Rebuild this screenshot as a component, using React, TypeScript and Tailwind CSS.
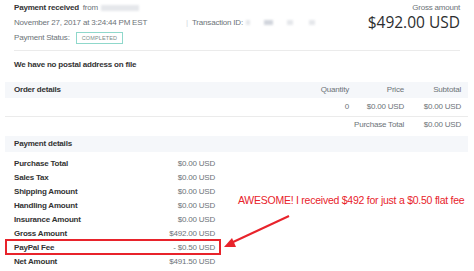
const paymentRows = [
  { label: "Purchase Total", value: "$0.00 USD" },
  { label: "Sales Tax", value: "$0.00 USD" },
  { label: "Shipping Amount", value: "$0.00 USD" },
  { label: "Handling Amount", value: "$0.00 USD" },
  { label: "Insurance Amount", value: "$0.00 USD" },
  { label: "Gross Amount", value: "$492.00 USD" },
  { label: "PayPal Fee", value: "- $0.50 USD", highlight: true },
  { label: "Net Amount", value: "$491.50 USD" },
];

const Blur = ({ className }: { className: string }) => (
  <span className={`inline-block blur-[1px] ${className}`} />
);

export default function App() {
  return (
    <div
      className="relative w-[474px] h-[271px] overflow-hidden bg-white text-[8px] tracking-[-0.2px] text-[#6c7378]"
      style={{ fontFamily: '"Liberation Sans", Arial, sans-serif' }}
    >
      <header className="px-[14px]">
        <div className="flex justify-between">
          <div className="leading-[15px]">
            <div className="flex items-center">
              <span className="font-bold text-[#333]">Payment received</span>
              <span className="ml-[4px]">from</span>
              <Blur className="ml-[3px] w-[38px] h-[6px] bg-gray-200" />
            </div>
            <div className="flex items-center">
              <span>November 27, 2017 at 3:24:44 PM EST</span>
              <span className="ml-[39px] text-gray-300">|</span>
              <span className="ml-[4px]">Transaction ID:</span>
              <Blur className="ml-[3px] w-[4px] h-[5px] bg-gray-200" />
              <Blur className="ml-[14px] w-[9px] h-[5px] bg-gray-300" />
              <Blur className="ml-[14px] w-[6px] h-[5px] bg-gray-200" />
              <Blur className="ml-[16px] w-[6px] h-[5px] bg-gray-200" />
            </div>
            <div className="flex items-center">
              <span>Payment Status:</span>
              <span className="ml-[6px] border border-[#8fd8cb] px-[5px] text-[5.5px] leading-[10px] tracking-wide text-[#7a8c88]">
                COMPLETED
              </span>
            </div>
          </div>
          <div className="flex flex-col items-end">
            <div className="leading-[15px]">Gross amount</div>
            <div
              className="text-[15.5px] leading-[15px] tracking-normal text-[#2c2e2f]"
              style={{ fontFamily: '"Open Sans", sans-serif' }}
            >
              $492.00 USD
            </div>
          </div>
        </div>
        <div className="mt-[5px] border-t border-[#ebebeb]" />
        <div className="mt-[6px] leading-[15px] font-bold text-[#333]">
          We have no postal address on file
        </div>
      </header>

      <section className="mt-[10px] ml-[5px] mr-[6px]">
        <div className="flex h-[16px] items-center bg-[#f5f7fa] pl-[9px] pr-[7px]">
          <span className="flex-1 font-bold text-[#333]">Order details</span>
          <span className="w-[60px] text-right">Quantity</span>
          <span className="w-[55px] text-right">Price</span>
          <span className="w-[57px] text-right">Subtotal</span>
        </div>
        <div className="flex h-[18px] items-center pr-[7px]">
          <span className="flex-1" />
          <span className="w-[60px] text-right">0</span>
          <span className="w-[55px] text-right">$0.00 USD</span>
          <span className="w-[57px] text-right">$0.00 USD</span>
        </div>
        <div className="flex h-[16px] items-center border-t border-[#ebebeb] pr-[7px]">
          <span className="flex-1" />
          <span className="w-[70px] text-right">Purchase Total</span>
          <span className="w-[57px] text-right">$0.00 USD</span>
        </div>

        <div className="mt-[4px] flex h-[16px] items-center bg-[#f5f7fa] pl-[9px]">
          <span className="font-bold text-[#333]">Payment details</span>
        </div>
        <div className="w-[216px] pt-[5px]">
          {paymentRows.map((row) => (
            <div key={row.label} className="relative flex h-[14px] items-center justify-between pl-[9px] pr-[6px]">
              <span className="font-bold text-[#333]">{row.label}</span>
              <span>{row.value}</span>
              {row.highlight && (
                <span className="absolute -top-[2px] bottom-0 left-0 right-0 border-2 border-[#e8232b]" />
              )}
            </div>
          ))}
        </div>
      </section>

      <div className="absolute left-[238px] top-[192px] whitespace-nowrap text-[10.5px] leading-[16px] tracking-[-0.25px] text-[#e8232b]">
        AWESOME! I received $492 for just a $0.50 flat fee
      </div>
      <svg className="absolute left-0 top-0" width="474" height="271">
        <line x1="289" y1="216" x2="231" y2="243" stroke="#e8232b" strokeWidth="2" />
        <path d="M224 247 L232 238 L236 247 Z" fill="#e8232b" />
      </svg>
    </div>
  );
}
